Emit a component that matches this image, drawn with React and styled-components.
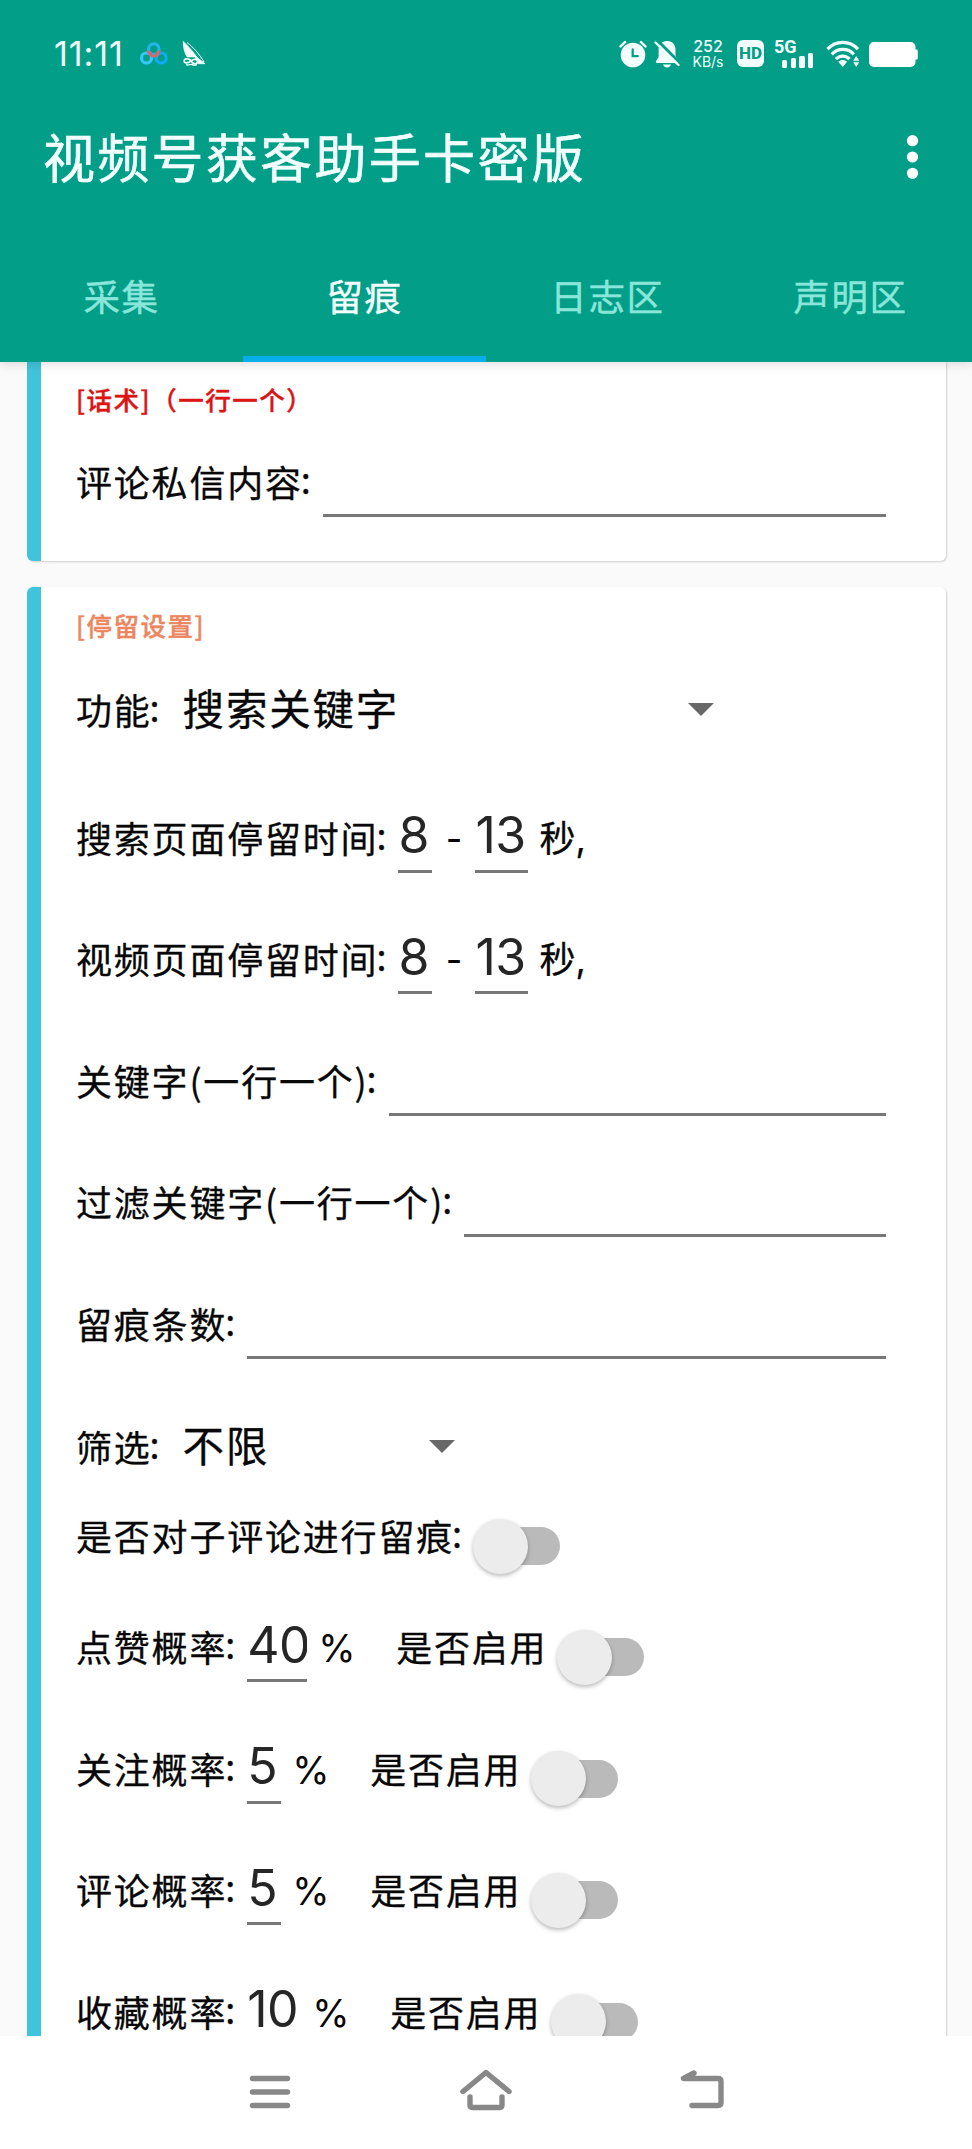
import React, { useState } from 'react';
import styled, { createGlobalStyle, ThemeProvider } from 'styled-components';

const theme = {
  primary: '#029e88',
  accent: '#08aeea',
  stripe: '#42c3dd',
  background: '#fafafa',
  line: '#777777',
  nav: '#888888',
  cjk: '"Noto Sans CJK SC", sans-serif',
  latin: 'Inter, "Noto Sans CJK SC", sans-serif',
};

const GlobalStyle = createGlobalStyle`
  *, *::before, *::after {
    box-sizing: border-box;
  }

  body {
    margin: 0;
    background: #fff;
    font-family: "Noto Sans CJK SC", sans-serif;
  }
`;

const Screen = styled.div`
  display: flex;
  flex-direction: column;
  width: 972px;
  height: 2149px;
  overflow: hidden;
  background: ${({ theme }) => theme.background};
`;

const Header = styled.header`
  flex: none;
  display: flex;
  flex-direction: column;
  height: 362px;
  color: #f2fffd;
  background: ${({ theme }) => theme.primary};
  box-shadow: 0 2px 10px rgba(0, 0, 0, .14);
  z-index: 1;
`;

const StatusBar = styled.div`
  display: flex;
  align-items: center;
  height: 107px;
  padding: 0 54px 0 54px;

  svg {
    flex: none;
    display: block;
  }
`;

const Time = styled.span`
  width: 86px;
  font: 400 34px/40px ${({ theme }) => theme.latin};
  letter-spacing: .9px;
`;

const StatusIcons = styled.div`
  display: flex;
  align-items: center;
  margin-left: auto;
`;

const Speed = styled.div`
  width: 34px;
  margin: 1px 12px 0 10px;
  text-align: center;
  font: 500 16px/15.5px ${({ theme }) => theme.latin};
  white-space: nowrap;
`;

const SpeedUnit = styled.div`
  font-size: 14px;
  font-weight: 400;
`;

const HdBadge = styled.div`
  width: 27px;
  height: 27px;
  margin-right: 10px;
  border-radius: 6px;
  text-align: center;
  font: 800 17px/27px Roboto, sans-serif;
  color: ${({ theme }) => theme.primary};
  background: #f2fffd;
`;

const Signal = styled.div`
  display: flex;
  flex-direction: column;
  width: 41px;
  height: 28px;
  margin-right: 11px;
  font: 700 18px/14px Roboto, sans-serif;
`;

const SignalBars = styled.div`
  display: flex;
  align-items: flex-end;
  gap: 3.4px;
  height: 15px;
  margin: -1px 0 0 8px;
`;

const SignalBar = styled.i`
  width: 5.3px;
  height: ${({ $size }) => $size}px;
  border-radius: 1.5px;
  background: #f2fffd;
`;

const Toolbar = styled.div`
  display: flex;
  align-items: center;
  justify-content: space-between;
  height: 100px;
  padding: 0 51px 0 43px;
`;

const Title = styled.h1`
  margin: -3px 0 0;
  font-size: 52px;
  font-weight: 400;
  line-height: 76px;
  letter-spacing: 2.3px;
  -webkit-text-stroke: .6px currentColor;
`;

const Tabs = styled.nav`
  display: flex;
  flex: 1;
  padding-top: 27px;
`;

const Tab = styled.button`
  flex: 1;
  height: 128px;
  padding: 2px 0 0;
  border: 0;
  border-bottom: 6px solid ${({ theme, $active }) => ($active ? theme.accent : 'transparent')};
  background: none;
  font: 400 36.5px/120px ${({ theme }) => theme.cjk};
  letter-spacing: 1.6px;
  color: ${({ $active }) => ($active ? '#f2fffd' : '#8ae6da')};
  -webkit-text-stroke: .4px currentColor;
`;

const Content = styled.main`
  flex: 1;
  overflow: hidden;
  padding: 0 26.5px 0 27px;
`;

const Card = styled.section`
  padding: ${({ $first }) => ($first ? '19px 59.5px 17px 35px' : '20px 59.5px 22px 35px')};
  border-left: 14px solid ${({ theme }) => theme.stripe};
  border-radius: ${({ $first }) => ($first ? '0 0 6px 6px' : '6px 6px 0 0')};
  background: #fff;
  box-shadow: 1px 1px 2px rgba(0, 0, 0, .17);

  & + & {
    margin-top: 26.5px;
  }
`;

const SectionTitle = styled.h2`
  margin: 0 0 ${({ $gap }) => $gap}px;
  font-size: 25.5px;
  font-weight: 500;
  line-height: 36px;
  letter-spacing: 1.5px;
  color: ${({ $color }) => $color};
  -webkit-text-stroke: .4px currentColor;
`;

const Row = styled.div`
  display: flex;
  align-items: center;
  height: ${({ $height }) => $height || 121.5}px;
  margin-bottom: ${({ $gap }) => $gap || 0}px;
`;

const Label = styled.span`
  flex: none;
  margin-bottom: 4px;
  font-size: 36px;
  line-height: 54px;
  letter-spacing: 1.8px;
  white-space: pre;
  color: #080808;
  -webkit-text-stroke: .3px currentColor;
`;

const ColonMark = styled.span`
  display: inline-block;
  width: 22px;
  margin-left: -2px;
  line-height: 1;
  vertical-align: 3px;
`;

const Field = styled.input`
  flex: ${({ $width }) => ($width ? 'none' : 1)};
  min-width: 0;
  width: ${({ $width }) => ($width ? `${$width}px` : 'auto')};
  height: 68.5px;
  padding: 0 0 4px;
  border: 0;
  border-bottom: 3px solid ${({ theme }) => theme.line};
  border-radius: 0;
  outline: 0;
  background: none;
  font: 400 50px/60px ${({ theme }) => theme.latin};
  letter-spacing: -.6px;
  color: #262626;
`;

const Dash = styled.span`
  width: 43px;
  text-align: center;
  font: 400 36px/54px ${({ theme }) => theme.latin};
`;

const Unit = styled.span`
  margin-left: 11px;
  font: 400 36px/54px ${({ theme }) => theme.latin};
  color: #080808;
  -webkit-text-stroke: .3px currentColor;
`;

const Percent = styled(Unit)`
  width: 78px;
  font-size: 38px;
  -webkit-text-stroke: 0;
`;

const Select = styled.div`
  display: flex;
  align-items: center;
  justify-content: space-between;
  width: ${({ $width }) => $width}px;
  margin: -4px 0 0 11px;
  font-size: 41.5px;
  line-height: 60px;
  letter-spacing: 1.8px;
  color: #080808;
  -webkit-text-stroke: .3px currentColor;
`;

const SelectValue = styled.span`
  margin-top: -4px;
`;

const Arrow = styled.i`
  border: solid transparent;
  border-width: 13.5px 13px 0;
  border-top-color: #686868;
`;

const Track = styled.button`
  flex: none;
  display: flex;
  align-items: center;
  width: 73px;
  height: 38px;
  margin: ${({ $top }) => $top}px 0 0 ${({ $left }) => $left}px;
  padding: 0;
  border: 0;
  border-radius: 19px;
  background: #bababa;
`;

const Thumb = styled.span`
  flex: none;
  width: 55px;
  height: 55px;
  margin-left: ${({ $on }) => ($on ? 32 : -14)}px;
  border-radius: 50%;
  background: #ececec;
  box-shadow: 0 2px 4px rgba(0, 0, 0, .28);
`;

const NavBar = styled.footer`
  flex: none;
  display: flex;
  justify-content: center;
  align-items: center;
  gap: 162px;
  height: 113px;
  padding-bottom: 1px;
  background: #fff;
  z-index: 1;
`;

const NavIcon = styled.svg`
  width: 54px;
  height: 54px;
  fill: none;
  stroke: ${({ theme }) => theme.nav};
  stroke-width: 5.4;
  stroke-linecap: round;
  stroke-linejoin: round;
`;

const Colon = () => <ColonMark>:</ColonMark>;

const Toggle = ({ left = 0, top = 18 }) => {
  const [on, setOn] = useState(false);
  return (
    <Track $left={left} $top={top} onClick={() => setOn(!on)}>
      <Thumb $on={on} />
    </Track>
  );
};

const CloudIcon = () => (
  <svg width="28" height="24" viewBox="0 0 28 24" fill="none" strokeWidth="3.2">
    <circle cx="13.8" cy="7.2" r="5.3" stroke="#21b5ec" />
    <circle cx="6.5" cy="16" r="5" stroke="#38c5f8" />
    <circle cx="21.2" cy="16" r="5" stroke="#0faaf0" />
    <path d="M8.500 8.500c0 3.500 2.800 5.500 5.400 5.500s5-2 5-5.500" stroke="#ce6872" />
    <path d="M9.200 12.600l2.600-1.800M18.200 12.600l-2.400-1.800" stroke="#ce6872" strokeWidth="2.400" />
  </svg>
);

const SailIcon = () => (
  <svg style={{ marginLeft: 14 }} width="24" height="27" viewBox="0 0 24 27" fill="none" stroke="#f2fffd">
    <path d="M.8.8C6.200 5.800 12.600 12.400 17.600 20.500L12.500 17.200 5 17.200C2.200 13.500.8 8 .8.8Z" fill="#f2fffd" stroke="none" />
    <path d="M5 2.500C11 7 17 13.500 22 22" strokeWidth="1" />
    <path d="M12.500 15.500L23 23.700H16.500Z" fill="#f2fffd" strokeWidth=".8" />
    <path d="M9 20.500C6 17.800 2.200 18.500 2.200 21s3.600 2.600 6.800 0 6.800-2 6.500.7-4.600 3.300-6.500-1.200" strokeWidth="1.700" />
    <path d="M4 24.700c2 .8 3.500-.2 5-.3s2.500 1.800 6 .2" strokeWidth="1.400" />
  </svg>
);

const AlarmIcon = () => (
  <svg width="28" height="28" viewBox="0 0 28 28" fill="none" strokeLinecap="round">
    <circle cx="14" cy="15" r="12.300" fill="#f2fffd" />
    <path d="M1.600 6.400L6 2.200M26.400 6.400L22 2.200" stroke="#f2fffd" strokeWidth="2.500" />
    <path d="M13.700 9.500v6.700h5" stroke="#029e88" strokeWidth="2.300" />
  </svg>
);

const BellOffIcon = () => (
  <svg style={{ marginLeft: 7 }} width="27" height="28" viewBox="0 0 27 28" fill="none">
    <path d="M13 1c6 0 8.500 4 8.500 9v6l3 5c.6 1.200 0 2-1 2H3c-1.200 0-1.500-.9-.9-1.900L4.600 17V10C4.600 4.500 7.500 1 13 1Z" fill="#f2fffd" />
    <path d="M9 24.500h8c-.8 2-2 3-4 3s-3.300-1-4-3Z" fill="#f2fffd" />
    <path d="M3.500.5l22 22" stroke="#029e88" strokeWidth="3" />
    <path d="M1.500 2.500l23 22.500" stroke="#f2fffd" strokeWidth="2.400" strokeLinecap="round" />
  </svg>
);

const WifiIcon = () => (
  <svg width="34" height="28" viewBox="0 0 34 28" fill="none" stroke="#f2fffd" strokeWidth="3.300">
    <path d="M1.500 9.200C10 .2 23.500.2 32 9.200" />
    <path d="M5.800 14.300c6.200-6.500 16-6.500 22 0" />
    <path d="M10 19.200c3.800-4 9.700-4 13.500 0" />
    <path d="M12.300 21.800c2.800-2.300 6-2.300 8.800 0L16.700 27Z" fill="#f2fffd" stroke="none" />
    <path d="M27.200 20.800l3-4.800 3 4.800ZM27.200 22.200l3 4.800 3-4.800Z" fill="#f2fffd" stroke="none" />
  </svg>
);

const BatteryIcon = () => (
  <svg style={{ marginLeft: 9, marginTop: 1 }} width="49" height="25" viewBox="0 0 49 25" fill="#fff">
    <rect width="46.500" height="25" rx="5" />
    <path d="M46 7.500h1.500c.8 0 1.300.5 1.300 1.300v7.400c0 .8-.5 1.300-1.300 1.300H46Z" />
  </svg>
);

const MoreIcon = () => (
  <svg width="16" height="46" viewBox="0 0 16 46" fill="#fff">
    <circle cx="7.500" cy="6.700" r="5.600" />
    <circle cx="7.500" cy="23" r="5.600" />
    <circle cx="7.500" cy="39.300" r="5.600" />
  </svg>
);

const tabs = ['采集', '留痕', '日志区', '声明区'];

const durations = ['搜索页面停留时间', '视频页面停留时间'];

const inputs = ['关键字(一行一个)', '过滤关键字(一行一个)', '留痕条数'];

const rates = [
  { label: '点赞概率', value: '40', width: 60 },
  { label: '关注概率', value: '5', width: 34 },
  { label: '评论概率', value: '5', width: 34 },
  { label: '收藏概率', value: '10', width: 54 },
];

const App = () => {
  const [activeTab, setActiveTab] = useState('留痕');

  return (
    <ThemeProvider theme={theme}>
      <GlobalStyle />
      <Screen>
        <Header>
          <StatusBar>
            <Time>11:11</Time>
            <CloudIcon />
            <SailIcon />
            <StatusIcons>
              <AlarmIcon />
              <BellOffIcon />
              <Speed>
                252
                <SpeedUnit>KB/s</SpeedUnit>
              </Speed>
              <HdBadge>HD</HdBadge>
              <Signal>
                5G
                <SignalBars>
                  {[7.5, 9.5, 12, 14.5].map(size => <SignalBar key={size} $size={size} />)}
                </SignalBars>
              </Signal>
              <WifiIcon />
              <BatteryIcon />
            </StatusIcons>
          </StatusBar>
          <Toolbar>
            <Title>视频号获客助手卡密版</Title>
            <MoreIcon />
          </Toolbar>
          <Tabs>
            {tabs.map(tab => (
              <Tab key={tab} $active={tab === activeTab} onClick={() => setActiveTab(tab)}>
                {tab}
              </Tab>
            ))}
          </Tabs>
        </Header>

        <Content>
          <Card $first>
            <SectionTitle $color="#dc1414" $gap={5}>[话术]（一行一个）</SectionTitle>
            <Row>
              <Label>
                评论私信内容
                <Colon />
              </Label>
              <Field />
            </Row>
          </Card>

          <Card>
            <SectionTitle $color="#ec8660" $gap={2}>[停留设置]</SectionTitle>
            <Row $height={132.75}>
              <Label>
                功能
                <Colon />
              </Label>
              <Select $width={531}>
                <SelectValue>搜索关键字</SelectValue>
                <Arrow />
              </Select>
            </Row>
            {durations.map(label => (
              <Row key={label}>
                <Label>
                  {label}
                  <Colon />
                </Label>
                <Field $width={34} defaultValue="8" />
                <Dash>-</Dash>
                <Field $width={53} defaultValue="13" />
                <Unit>秒,</Unit>
              </Row>
            ))}
            {inputs.map(label => (
              <Row key={label}>
                <Label>
                  {label}
                  <Colon />
                </Label>
                <Field />
              </Row>
            ))}
            <Row $height={125.5}>
              <Label>
                筛选
                <Colon />
              </Label>
              <Select $width={272}>
                <SelectValue>不限</SelectValue>
                <Arrow />
              </Select>
            </Row>
            <Row $height={52.5} $gap={24}>
              <Label>
                是否对子评论进行留痕
                <Colon />
              </Label>
              <Toggle left={13} />
            </Row>
            {rates.map(({ label, value, width }) => (
              <Row key={label}>
                <Label>
                  {label}
                  <Colon />
                </Label>
                <Field $width={width} defaultValue={value} />
                <Percent>%</Percent>
                <Label>是否启用</Label>
                <Toggle left={24} />
              </Row>
            ))}
          </Card>
        </Content>

        <NavBar>
          <NavIcon viewBox="0 0 54 54">
            <path d="M9.500 13.500h35M9.500 27h35M9.500 40.500h35" />
          </NavIcon>
          <NavIcon viewBox="0 0 54 54">
            <path d="M4 26.500L27 7.500l23 19M11 32v8q0 2.500 2.500 2.500h27q2.500 0 2.500-2.500v-8" />
          </NavIcon>
          <NavIcon viewBox="0 0 54 54">
            <path d="M19 8L8.500 13.500H43q3 0 3 3v21q0 3-3 3H17" />
          </NavIcon>
        </NavBar>
      </Screen>
    </ThemeProvider>
  );
};

export default App;
